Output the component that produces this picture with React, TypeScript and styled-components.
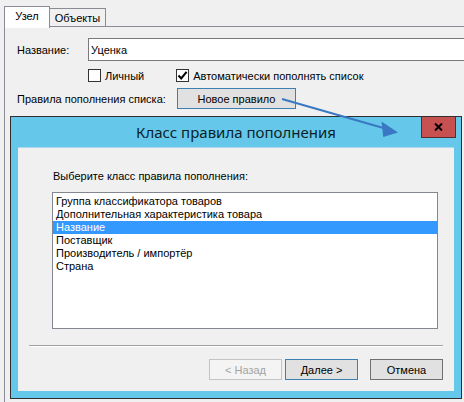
import React from "react";
import styled, { createGlobalStyle } from "styled-components";

const Global = createGlobalStyle`
  html, body { margin: 0; padding: 0; background: #f0f0f0; }
  body {
    font-family: "Liberation Sans", Arial, sans-serif;
    font-size: 11px;
    color: #000;
  }
  * { box-sizing: border-box; }
`;

const Screen = styled.div`
  position: relative;
  width: 464px;
  height: 402px;
  overflow: hidden;
  background: #f0f0f0;
  padding: 6px 0 0 4px;
`;

/* ---------- tab control ---------- */

const TabStrip = styled.div`
  display: flex;
  align-items: flex-end;
  height: 20px;
  position: relative;
  z-index: 1;
`;

const Tab = styled.div<{ $active?: boolean; $w: number }>`
  width: ${(p) => p.$w}px;
  height: ${(p) => (p.$active ? 22 : 18)}px;
  margin-bottom: ${(p) => (p.$active ? -2 : 0)}px;
  margin-left: ${(p) => (p.$active ? 0 : -1)}px;
  border: 1px solid #898c95;
  border-bottom: none;
  background: ${(p) => (p.$active ? "#ffffff" : "#f0f0f0")};
  display: flex;
  align-items: ${(p) => (p.$active ? "flex-start" : "center")};
  padding-top: ${(p) => (p.$active ? 3 : 0)}px;
  justify-content: center;
  font-size: 11px;
  ${(p) => (p.$active ? "" : "z-index: -1;")}
`;

const Panel = styled.div`
  border-top: 1px solid #898c95;
  border-left: 1px solid #898c95;
  height: 400px;
  padding: 11px 0 0 12px;
`;

const FieldRow = styled.div<{ $gap: number }>`
  display: flex;
  align-items: center;
  margin-top: ${(p) => p.$gap}px;
`;

const Label = styled.span<{ $w: number }>`
  width: ${(p) => p.$w}px;
  flex: none;
  white-space: nowrap;
`;

const TextInput = styled.div`
  width: 420px;
  height: 23px;
  flex: none;
  border: 1px solid #7a7a7a;
  background: #fff;
  padding: 0 0 0 2px;
  display: flex;
  align-items: center;
`;

const CheckGroup = styled.div`
  display: flex;
  align-items: center;
  margin-left: 71px;
  gap: 32px;
  height: 13px;
`;

const CheckItem = styled.label`
  display: flex;
  align-items: center;
  gap: 4px;
  white-space: nowrap;
`;

const Box = styled.span`
  width: 13px;
  height: 13px;
  border: 1px solid #333;
  background: #fff;
  display: flex;
  align-items: center;
  justify-content: center;
`;

const PushButton = styled.div<{ $w: number; $kind?: "default" | "normal" | "disabled" }>`
  width: ${(p) => p.$w}px;
  height: 21px;
  flex: none;
  display: flex;
  align-items: center;
  justify-content: center;
  white-space: nowrap;
  border: 1px solid
    ${(p) =>
      p.$kind === "default" ? "#3c7fb1" : p.$kind === "disabled" ? "#c4c4c4" : "#707070"};
  background: ${(p) => (p.$kind === "disabled" ? "#f4f4f4" : "#e1e1e1")};
  color: ${(p) => (p.$kind === "disabled" ? "#a3a3a3" : "#000")};
`;

/* ---------- dialog window ---------- */

const Window = styled.div`
  position: absolute;
  left: 10px;
  top: 116px;
  width: 452px;
  height: 283px;
  border: 1px solid #2f2f2f;
  background: #65c8eb;
  padding: 0 7px 7px 7px;
  display: flex;
  flex-direction: column;
  z-index: 2;
`;

const TitleBar = styled.div`
  position: relative;
  height: 30px;
  flex: none;
  display: flex;
  align-items: center;
  justify-content: center;
  font-family: "Noto Sans", "Open Sans", sans-serif;
  font-size: 15px;
  color: #0e1f26;
  padding-bottom: 1px;
`;

const CloseButton = styled.div`
  position: absolute;
  top: 0;
  right: -2px;
  width: 35px;
  height: 21px;
  background: #c75050;
  border: 1px solid #5b2a2a;
  border-top: none;
  display: flex;
  align-items: center;
  justify-content: center;
`;

const Client = styled.div`
  flex: 1;
  background: #f0f0f0;
  border-top: 1px solid #a9d9ea;
  display: flex;
  flex-direction: column;
`;

const Prompt = styled.div`
  margin: 22px 0 0 35px;
  line-height: 13px;
`;

const ListBox = styled.div`
  margin: 9px 0 0 34px;
  width: 386px;
  height: 137px;
  border: 1px solid #828790;
  background: #fff;
  padding-top: 2px;
  flex: none;
`;

const ListItem = styled.div<{ $selected?: boolean }>`
  height: 13px;
  line-height: 13px;
  padding-left: 3px;
  white-space: nowrap;
  overflow: hidden;
  background: ${(p) => (p.$selected ? "#3399ff" : "transparent")};
  color: ${(p) => (p.$selected ? "#fff" : "#000")};
`;

const Separator = styled.div`
  margin: 16px 0 0 11px;
  width: 414px;
  height: 2px;
  border-top: 1px solid #a0a0a0;
  border-bottom: 1px solid #fff;
`;

const ButtonRow = styled.div`
  display: flex;
  justify-content: flex-end;
  margin: 12px 11px 0 0;
  gap: 3px;
`;

const CancelSlot = styled.div`
  margin-left: 9px;
  display: flex;
`;

const Pointer = styled.svg`
  position: absolute;
  left: 0;
  top: 0;
  z-index: 3;
  pointer-events: none;
`;

const items = [
  "Группа классификатора товаров",
  "Дополнительная характеристика товара",
  "Название",
  "Поставщик",
  "Производитель / импортёр",
  "Страна",
];

export default function App() {
  return (
    <>
      <Global />
      <Screen>
        <TabStrip>
          <Tab $active $w={46}>Узел</Tab>
          <Tab $w={57}>Объекты</Tab>
        </TabStrip>
        <Panel>
          <FieldRow $gap={0}>
            <Label $w={71}>Название:</Label>
            <TextInput>Уценка</TextInput>
          </FieldRow>
          <FieldRow $gap={8}>
            <CheckGroup>
              <CheckItem>
                <Box />
                Личный
              </CheckItem>
              <CheckItem>
                <Box>
                  <svg width="11" height="11" viewBox="0 0 11 11">
                    <path d="M1.5 5.5 L4.2 8.5 L9.6 1.8" fill="none" stroke="#000" strokeWidth="2" />
                  </svg>
                </Box>
                Автоматически пополнять список
              </CheckItem>
            </CheckGroup>
          </FieldRow>
          <FieldRow $gap={6}>
            <Label $w={160}>Правила пополнения списка:</Label>
            <PushButton $w={119} $kind="default">Новое правило</PushButton>
          </FieldRow>
        </Panel>

        <Window>
          <TitleBar>
            Класс правила пополнения
            <CloseButton>
              <svg width="9" height="8" viewBox="0 0 9 8">
                <path d="M1 0.5 L8 7.5 M8 0.5 L1 7.5" stroke="#000" strokeWidth="2" />
              </svg>
            </CloseButton>
          </TitleBar>
          <Client>
            <Prompt>Выберите класс правила пополнения:</Prompt>
            <ListBox>
              {items.map((t, i) => (
                <ListItem key={t} $selected={i === 2}>
                  {t}
                </ListItem>
              ))}
            </ListBox>
            <Separator />
            <ButtonRow>
              <PushButton $w={73} $kind="disabled">&lt; Назад</PushButton>
              <PushButton $w={73} $kind="default">Далее &gt;</PushButton>
              <CancelSlot>
                <PushButton $w={73}>Отмена</PushButton>
              </CancelSlot>
            </ButtonRow>
          </Client>
        </Window>

        <Pointer width="464" height="402" viewBox="0 0 464 402">
          <line x1="282" y1="99" x2="386" y2="128.8" stroke="#3a78c4" strokeWidth="2" />
          <polygon points="398,132.5 381.5,121.5 383.2,137" fill="#3a78c4" />
        </Pointer>
      </Screen>
    </>
  );
}
